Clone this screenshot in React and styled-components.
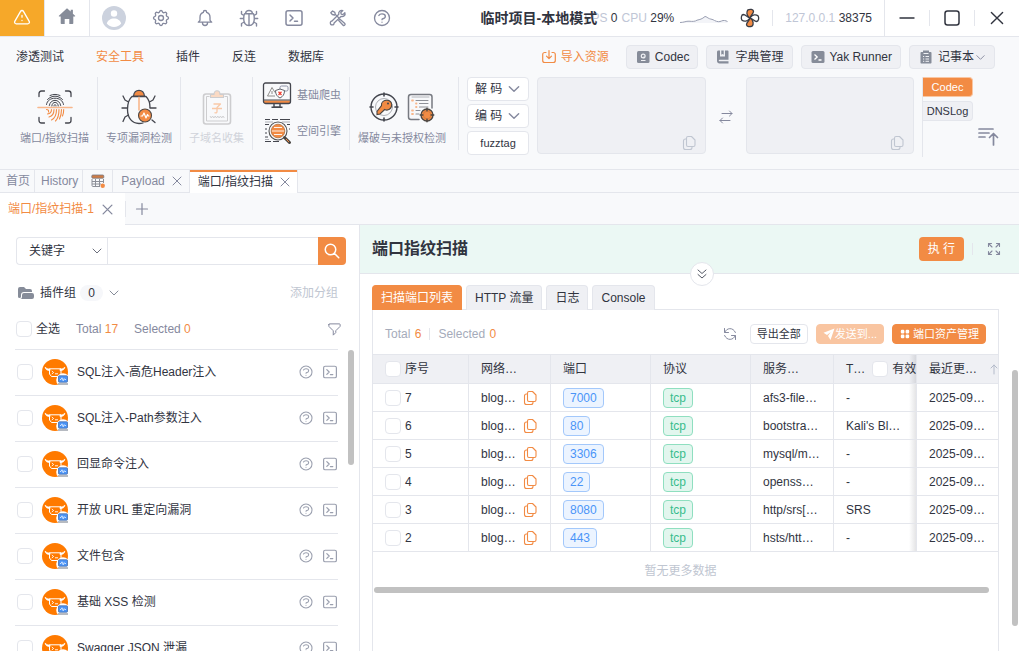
import React, { useState } from "react";
import styled, { createGlobalStyle } from "styled-components";
import {
  HiOutlineCog,
  HiOutlineBell,
  HiOutlineExclamation,
  HiOutlineQuestionMarkCircle,
  HiOutlineFilter,
  HiOutlineSearch,
  HiFolderOpen,
  HiViewGrid,
} from "react-icons/hi";

const GlobalStyle = createGlobalStyle`
  * {
    box-sizing: border-box;
  }

  body {
    margin: 0;
    background: #fff;
    color: #31343f;
    font-family: "Liberation Sans", "Noto Sans CJK SC", sans-serif;
    font-size: 12px;
    line-height: 16px;
  }

  button, input, select, textarea {
    font: inherit;
    color: inherit;
    margin: 0;
  }

  button {
    cursor: pointer;
  }

  svg {
    display: block;
    flex: none;
  }
`;

const Page = styled.div`
  display: flex;
  flex-direction: column;
  height: 100vh;
  overflow: hidden;
`;

const Spacer = styled.div`
  flex: 1;
`;

const Divider = styled.span`
  flex: none;
  width: 1px;
  height: ${(p) => p.$h || 16}px;
  margin: 0 ${(p) => p.$gap || 0}px;
  background: #e4e6ec;
`;

const IconButton = styled.button`
  display: flex;
  flex: none;
  align-items: center;
  justify-content: center;
  width: ${(p) => p.$w || 20}px;
  height: ${(p) => p.$h || 20}px;
  padding: 0;
  border: 0;
  background: none;
  color: ${(p) => p.$color || "#85899e"};

  .thin path {
    stroke-width: 1.6;
  }
`;

/* ---------- title bar ---------- */

const TitleBar = styled.header`
  display: flex;
  flex: none;
  align-items: center;
  height: 37px;
  border-bottom: 1px solid #e4e6ec;
`;

const WarnButton = styled(IconButton)`
  width: 44px;
  height: 36px;
  background: #f6a829;
  color: #fff;
`;

const HomeButton = styled(IconButton)`
  width: 46px;
  height: 36px;
  border: solid #e4e6ec;
  border-width: 0 1px;
  padding-bottom: 4px;
`;

const ToolIcons = styled.nav`
  display: flex;
  align-items: center;
  padding-left: 2px;
`;

const ProjectName = styled.h1`
  margin: 0;
  font-size: 14px;
  line-height: 20px;
  white-space: nowrap;
  z-index: 1;
`;

const Stats = styled.div`
  display: flex;
  align-items: center;
  gap: 4px;
  margin: 0 6px 0 -13px;
`;

const Stat = styled.span`
  color: #c0c6d6;
  white-space: nowrap;

  b {
    color: #31343f;
    font-weight: normal;
  }
`;

const Address = styled(Stat)`
  margin: 0 12px;
`;

const WindowButtons = styled.div`
  display: flex;
  align-items: center;
  height: 36px;
  border-left: 1px solid #e4e6ec;
`;

/* ---------- menu ---------- */

const Menu = styled.nav`
  display: flex;
  flex: none;
  align-items: center;
  gap: 8px;
  height: 40px;
  padding: 0 24px 0 16px;
  background: #f8f9fb;
`;

const MenuLinks = styled.div`
  display: flex;
  gap: 32px;
`;

const MenuLink = styled.a`
  color: ${(p) => (p.$active ? "#f28b44" : "#31343f")};
  text-decoration: none;
`;

const MenuButton = styled.button`
  display: flex;
  align-items: center;
  gap: 4px;
  height: 24px;
  padding: 0 8px;
  border: 1px solid ${(p) => (p.$plain ? "transparent" : "#e4e6ec")};
  border-radius: 4px;
  background: ${(p) => (p.$plain ? "none" : "#eff0f4")};
  color: ${(p) => (p.$plain ? "#f28b44" : "#31343f")};
  white-space: nowrap;
`;

const Drop = styled.span`
  display: flex;
  align-items: center;
  gap: 1px;

  svg {
    color: #85899e;
  }
`;

/* ---------- tool ribbon ---------- */

const Ribbon = styled.section`
  display: flex;
  flex: none;
  height: 93px;
  padding-left: 12px;
  border-bottom: 1px solid #e4e6ec;
  background: #f8f9fb;
`;

const Tool = styled.button`
  display: flex;
  flex-direction: column;
  flex: none;
  align-items: center;
  gap: 5px;
  height: 73px;
  padding: 12px ${(p) => (p.$last ? 12 : 8)}px 0 8px;
  border: 0;
  border-right: 1px solid #e4e6ec;
  background: none;
  color: #85899e;
  font-size: 11px;

  &:disabled {
    color: #d0d3da;
  }
`;

const ToolPair = styled.div`
  display: flex;
  flex-direction: column;
  flex: none;
  gap: 8px;
  height: 73px;
  padding: 4px 8px 0;
  border-right: 1px solid #e4e6ec;
`;

const SmallTool = styled.button`
  display: flex;
  align-items: center;
  gap: 4px;
  height: 28px;
  padding: 0;
  border: 0;
  background: none;
  color: #85899e;
  font-size: 11px;
`;

const IconPair = styled.span`
  display: flex;
  gap: 4px;
`;

const CodecButtons = styled.div`
  display: flex;
  flex-direction: column;
  flex: none;
  gap: 3px;
  width: 62px;
  margin: 0 8px;
`;

const CodecButton = styled.button`
  display: flex;
  align-items: center;
  justify-content: center;
  gap: 5px;
  height: 24px;
  padding: 0;
  border: 1px solid #e4e6ec;
  border-radius: 4px;
  background: #fff;
  font-size: ${(p) => (p.$small ? 11 : 12)}px;

  svg {
    color: #85899e;
  }
`;

const CodecField = styled.div`
  display: flex;
  flex: 1;
  align-items: flex-end;
  min-width: 0;
  height: 77px;
  padding: 0 6px;
  border: 1px solid #e4e6ec;
  border-radius: 4px;
  background: #eff0f4;

  textarea {
    flex: 1;
    width: 0;
    min-width: 0;
    height: 70px;
    padding: 4px;
    border: 0;
    outline: 0;
    resize: none;
    background: none;
  }
`;

const SwapButton = styled(IconButton)`
  width: 40px;
  height: 80px;
`;

const RibbonSide = styled.div`
  display: flex;
  flex: none;
  flex-direction: column;
  gap: 4px;
  width: 51px;
  height: 80px;
  margin-left: 8px;
  border-left: 1px solid #e4e6ec;
`;

const SideTab = styled.button`
  height: 20px;
  padding: 0;
  border: 1px solid ${(p) => (p.$active ? "#f9c6a2" : "#e4e6ec")};
  border-left: 0;
  border-radius: 0 4px 4px 0;
  background: ${(p) => (p.$active ? "#f28b44" : "#eff0f4")};
  color: ${(p) => (p.$active ? "#fff" : "#31343f")};
  font-size: 11px;
`;

const CollapseButton = styled(IconButton)`
  align-self: flex-start;
  width: 30px;
  height: 24px;
  margin: 48px 16px 0 0;
`;

/* ---------- page tabs ---------- */

const PageTabs = styled.div`
  display: flex;
  flex: none;
  height: 23px;
  border-bottom: 1px solid #e4e6ec;
  background: #f8f9fb;
`;

const PageTab = styled.button`
  display: flex;
  align-items: center;
  gap: 7px;
  height: ${(p) => (p.$active ? 23 : 22)}px;
  padding: 0 ${(p) => (p.$close ? 7 : 4)}px 0 ${(p) => (p.$close ? 8 : 6)}px;
  border: 0;
  border-right: 1px solid #e4e6ec;
  background: ${(p) => (p.$active ? "#fff" : "none")};
  box-shadow: ${(p) => (p.$active ? "inset 0 2px #f28b44" : "none")};
  color: ${(p) => (p.$active ? "#31343f" : "#85899e")};
  white-space: nowrap;

  svg {
    color: #85899e;
  }
`;

const SubTabs = styled.div`
  display: flex;
  flex: none;
  align-items: center;
  height: 32px;
  background: #f8f9fb;
  border-bottom: 1px solid #e4e6ec;
`;

const SubTab = styled.button`
  display: flex;
  flex: none;
  align-items: center;
  gap: 8px;
  width: 125px;
  height: 32px;
  margin-bottom: -1px;
  padding: 0 0 0 8px;
  border: 0;
  background: #fff;
  color: #f28b44;

  svg {
    color: #85899e;
  }
`;

/* ---------- plugin panel ---------- */

const Main = styled.main`
  display: flex;
  flex: 1;
  min-height: 0;
`;

const PluginPanel = styled.aside`
  display: flex;
  flex-direction: column;
  flex: none;
  width: 360px;
  padding: 12px 5px 0 16px;
  border-right: 1px solid #e4e6ec;
`;

const SearchBox = styled.form`
  display: flex;
  flex: none;
  height: 28px;
  margin-right: 8px;

  input {
    flex: 1;
    min-width: 0;
    padding: 0 8px;
    border: 1px solid #e4e6ec;
    border-right: 0;
    outline: 0;
  }

  button {
    width: 28px;
    height: 28px;
    border-radius: 0 4px 4px 0;
    background: #f28b44;
    color: #fff;
  }
`;

const SelectWrap = styled.div`
  display: grid;
  width: 91px;
  align-items: center;

  select,
  svg {
    grid-area: 1 / 1;
  }

  select {
    height: 28px;
    padding: 0 12px;
    border: 1px solid #e4e6ec;
    border-right: 0;
    border-radius: 4px 0 0 4px;
    outline: 0;
    appearance: none;
    background: #fff;
  }

  svg {
    justify-self: end;
    margin-right: 4px;
    color: #6b6f7c;
    pointer-events: none;
  }
`;

const GroupRow = styled.div`
  display: flex;
  flex: none;
  align-items: center;
  height: 16px;
  margin: 20px 16px 0 0;

  svg {
    color: #868c99;
  }
`;

const GroupName = styled.span`
  margin: 0 4px;
`;

const Count = styled.span`
  width: 23px;
  margin-right: 5px;
  border-radius: 8px;
  background: #f6f7fa;
  text-align: center;
`;

const AddGroup = styled.button`
  padding: 0;
  border: 0;
  background: none;
  color: #c0c6d1;
`;

const SelectRow = styled.div`
  display: flex;
  flex: none;
  align-items: center;
  gap: 16px;
  height: 16px;
  margin: 20px 11px 12px 0;
`;

const CheckLabel = styled.label`
  display: flex;
  align-items: center;
  gap: 4px;
`;

const Check = styled.input.attrs({ type: "checkbox" })`
  flex: none;
  width: 16px;
  height: 16px;
  border: 1px solid #e4e6ec;
  border-radius: 4px;
  background: #fff;
  appearance: none;

  &:checked {
    border-color: #f28b44;
    background: #f28b44;
  }
`;

const Total = styled.span`
  color: ${(p) => p.$color || "#85899e"};
  white-space: nowrap;

  b {
    margin-left: ${(p) => p.$gap || 0}px;
    color: #f28b44;
    font-weight: normal;
  }
`;

const ListArea = styled.div`
  display: flex;
  flex: 1;
  gap: 10px;
  min-height: 0;
  margin-left: -1px;
`;

const PluginList = styled.ul`
  flex: 1;
  margin: 0;
  padding: 0;
  overflow: hidden;
  list-style: none;
`;

const PluginItem = styled.li`
  display: flex;
  align-items: center;
  height: 46px;
  padding: 0 0 1px 2px;
  border-top: 1px solid #e4e6ec;
`;

const PluginLabel = styled(CheckLabel)`
  flex: 1;
  gap: 9px;
`;

const ItemButton = styled(IconButton)`
  width: 16px;
  margin-left: 8px;
  color: #9a9fae;
`;

const Scrollbar = styled.div`
  flex: none;
  width: 6px;
  height: ${(p) => p.$h};
  margin-top: ${(p) => p.$top}px;
  border-radius: 3px;
  background: #c1c1c1;
`;

/* ---------- result panel ---------- */

const ResultPanel = styled.section`
  display: flex;
  flex-direction: column;
  flex: 1;
  min-width: 0;
`;

const ResultHeader = styled.div`
  position: relative;
  display: flex;
  flex: none;
  align-items: center;
  height: 49px;
  padding: 0 12px;
  border-bottom: 1px solid #e4e6ec;
  background: #ebf8f4;

  h2 {
    margin: 0;
    font-size: 16px;
    line-height: 24px;
  }
`;

const RunButton = styled.button`
  height: 24px;
  padding: 0 9px;
  border: 0;
  border-radius: 4px;
  background: #f28b44;
  color: #fff;
`;

const FoldButton = styled(IconButton)`
  position: absolute;
  bottom: -13px;
  left: 50%;
  width: 24px;
  height: 24px;
  border: 1px solid #e4e6ec;
  border-radius: 50%;
  background: #fff;
  color: #555965;
`;

const ResultBody = styled.div`
  display: flex;
  flex: 1;
  gap: 13px;
  min-height: 0;
  padding: 11px 1px 0 12px;
`;

const ResultContent = styled.div`
  display: flex;
  flex: 1;
  flex-direction: column;
  min-width: 0;
`;

const ResultTabs = styled.div`
  display: flex;
  flex: none;
  gap: 4px;
  height: 24px;
`;

const ResultTab = styled.button`
  height: 25px;
  padding: 0 8px;
  border: 1px solid ${(p) => (p.$active ? "#f28b44" : "#e4e6ec")};
  border-bottom: 0;
  border-radius: 4px 4px 0 0;
  background: ${(p) => (p.$active ? "#f28b44" : "#eff0f4")};
  color: ${(p) => (p.$active ? "#fff" : "#31343f")};
  white-space: nowrap;
  z-index: 1;
`;

const ResultCard = styled.div`
  flex: 1;
  border: 1px solid #e4e6ec;
  border-bottom: 0;
`;

const TableTools = styled.div`
  display: flex;
  align-items: center;
  height: 44px;
  padding: 4px 12px 0;
`;

const SmallButton = styled.button`
  display: flex;
  align-items: center;
  gap: ${(p) => p.$gap || 0}px;
  height: 20px;
  margin-left: ${(p) => p.$left || 8}px;
  padding: 0 6px;
  border: 1px solid ${(p) => (p.$filled ? "#f28b44" : "#e4e6ec")};
  border-radius: 4px;
  background: ${(p) => (p.$filled ? "#f28b44" : "#fff")};
  color: ${(p) => (p.$filled ? "#fff" : "#31343f")};
  font-size: 11px;
  white-space: nowrap;

  &:disabled {
    border-color: #f9c5a1;
    background: #f9c5a1;
  }
`;

const PortTable = styled.table`
  width: 100%;
  border-spacing: 0;
  table-layout: fixed;

  th,
  td {
    height: 28px;
    padding: 0 0 0 12px;
    border-right: 1px solid #e4e6ec;
    border-bottom: 1px solid #e4e6ec;
    overflow: hidden;
    font-weight: normal;
    text-align: left;
    white-space: nowrap;
  }

  th {
    height: 30px;
    border-top: 1px solid #e4e6ec;
    background: #eff0f4;
  }

  th:nth-last-child(2),
  td:nth-last-child(2) {
    background-image: linear-gradient(to left, rgba(49, 52, 63, 0.13), transparent 7px);
  }

  th:last-child,
  td:last-child {
    border-right: 0;
  }
`;

const Col = styled.col`
  width: ${(p) => p.$w};
`;

const CellFlex = styled.div`
  display: flex;
  align-items: center;
  gap: ${(p) => p.$gap || 4}px;
`;

const Tag = styled.span`
  display: inline-block;
  height: 20px;
  padding: 1px 6px;
  border: 1px solid ${(p) => (p.$green ? "#8fdfc0" : "#a3c8fb")};
  border-radius: 4px;
  background: ${(p) => (p.$green ? "#e2f6ee" : "#ecf4ff")};
  color: ${(p) => (p.$green ? "#38bd8c" : "#4a94f8")};
  vertical-align: middle;
`;

const Empty = styled.p`
  margin: 0;
  padding: 11px 10px 8px 0;
  color: #c0c6d1;
  text-align: center;
`;

const HScrollbar = styled.div`
  height: 6px;
  margin: 0 9px 0 1px;
  border-radius: 3px;
  background: #c1c1c1;
`;

/* ---------- icons ---------- */

const Svg = ({ size = 16, box = "0 0 16 16", sw = 1.2, children }) => (
  <svg
    width={size}
    height={size}
    viewBox={box}
    fill="none"
    stroke="currentColor"
    strokeWidth={sw}
    strokeLinecap="round"
    strokeLinejoin="round"
    aria-hidden="true"
  >
    {children}
  </svg>
);

const Chevron = ({ size = 12, sw = 1 }) => (
  <Svg size={size} sw={sw} box="0 0 12 12">
    <path d="M2 4l4 4 4-4" />
  </Svg>
);

const Cross = ({ size = 10, sw = 1 }) => (
  <Svg size={size} sw={sw} box="1 1 10 10">
    <path d="M2 2l8 8M10 2l-8 8" />
  </Svg>
);

const Home = () => (
  <svg width="18" height="18" viewBox="0 0 18 18" fill="#868c99" aria-hidden="true">
    <path d="M9 1.2L.9 8.8c-.3.3 0 .8.4.8h1.4v6.6c0 .5.3.8.8.8h3.2v-5h4.6v5h3.2c.5 0 .8-.3.8-.8V9.6h1.4c.4 0 .7-.5.4-.8l-2.200-2V2.7h-2.200v1.9z" />
  </svg>
);

const Avatar = () => (
  <svg width="24" height="24" viewBox="0 0 24 24" aria-hidden="true">
    <circle cx="12" cy="12" r="12" fill="#ccd2de" />
    <circle cx="12" cy="7.5" r="3.2" fill="#fff" />
    <path d="M4.8 17.500c.8-3 3.600-5 7.200-5s6.400 2 7.200 5c-1.700 2.200-4.300 3.500-7.200 3.500s-5.500-1.300-7.200-3.500z" fill="#fff" />
  </svg>
);

const Bug = () => (
  <Svg size={20} box="0 0 20 20" sw={1.4}>
    <path d="M6.500 5.500c.5-4 6.500-4 7 0M5.500 5.800h9c.6 1.300.8 3 .8 5 0 4-2 6.700-5.300 6.700s-5.300-2.700-5.300-6.700c0-2 .2-3.700.8-5zM10 6v11.500M4.700 10.500H1.300M15.300 10.500h3.400M4.900 7.500L2.500 6V3.500M15.100 7.500L17.500 6V3.500M5.300 14l-2.800 1.500V18M14.700 14l2.800 1.500V18" />
  </Svg>
);

const Terminal = ({ size = 20, sw = 1.5 }) => (
  <Svg size={size} box="0 0 20 20" sw={sw}>
    <rect x="2" y="2.800" width="16" height="14.400" rx="2" />
    <path d="M6 7l3 3-3 3M10.500 13.200h3" />
  </Svg>
);

const Tools = () => (
  <Svg size={20} box="0 0 20 20" sw={1.3}>
    <path d="M2.800 4.800l1.800-1.800 2.200 1.400.5 2 3.400 3.400M6.600 7l-2.300-.5-1.500-1.700M12 11.200l4.800 4.300c1 1-.7 2.700-1.700 1.700l-4.400-4.700z" />
    <path d="M16.900 4.600l-2 2-1.700-.4-.4-1.700 2-2c-2.400-.8-4.700 1.300-4 3.800L4 13c-2.200 0-2.300 3.800.2 3.800 1.200 0 1.900-.8 1.900-1.900l6.900-6.400c2.600.7 4.700-1.500 3.900-3.900z" />
  </Svg>
);

const Spark = () => (
  <svg width="48" height="16" viewBox="0 0 48 16" fill="none" aria-hidden="true">
    <path d="M0 12.500c4 0 6-1.500 9-1.300 4 .4 6 .3 8-1 3-.8 5-1 8-3.700 1.500 0 2.500 1.500 4.500 2.200s3 .5 5 1.800c3 1.500 5 1.500 7 .5s4-.5 6 .5V13H0z" fill="#f3f4f8" />
    <path d="M0 12.500c4 0 6-1.500 9-1.300 4 .4 6 .3 8-1 3-.8 5-1 8-3.700 1.500 0 2.500 1.500 4.500 2.200s3 .5 5 1.800c3 1.500 5 1.500 7 .5s4-.5 6 .5" stroke="#9a9fb2" />
  </svg>
);

const blade = "M10 10C6.500 8 6 4 8 1.800c2.300-1 5-.4 5.500 1.400C13.500 6 11 6.500 10 10z";

const Fan = () => (
  <svg width="20" height="20" viewBox="0 0 20 20" stroke="#383b44" strokeWidth="1.3" strokeLinejoin="round" aria-hidden="true">
    <path d={blade} fill="#fff" transform="rotate(90 10 10)" />
    <path d={blade} fill="#fff" transform="rotate(270 10 10)" />
    <path d={blade} fill="#f28b44" />
    <path d={blade} fill="#f28b44" transform="rotate(180 10 10)" />
  </svg>
);

const Import = () => (
  <Svg>
    <path d="M5 3.500H3.700c-1.200 0-2 .8-2 2v6c0 1.200.8 2 2 2h8.600c1.200 0 2-.8 2-2v-6c0-1.200-.8-2-2-2H11M8 1.500v8M5.500 7.200L8 9.700l2.500-2.500" />
  </Svg>
);

const CodecIcon = () => (
  <svg width="16" height="16" viewBox="0 0 16 16" aria-hidden="true">
    <rect x="2" y="2" width="12.500" height="12" rx="1.500" fill="#868c99" />
    <circle cx="8.200" cy="7" r="1.900" fill="none" stroke="#eff0f4" strokeWidth="1.200" />
    <path d="M6 11.500h4.500M9 7.500v1.700" stroke="#eff0f4" strokeWidth="1.200" />
  </svg>
);

const BookIcon = () => (
  <svg width="16" height="16" viewBox="0 0 16 16" aria-hidden="true">
    <path d="M3.500 1.500H5v6h5v-6h2.500c.6 0 1 .4 1 1v8.200H4.500c-1 0-1 1.600 0 1.600h9v2.200h-9c-1.400 0-2.500-1-2.500-2.500V3c0-.9.6-1.500 1.500-1.500z" fill="#868c99" />
    <path d="M6.300 1.500h2.400v4.200l-1.200-.7-1.200.7z" fill="#868c99" />
  </svg>
);

const YakIcon = () => (
  <svg width="16" height="16" viewBox="0 0 16 16" aria-hidden="true">
    <rect x="1.500" y="2" width="13" height="12" rx="1.500" fill="#868c99" />
    <path d="M4.500 5.500L7.200 8l-2.700 2.500M8.500 11h3" fill="none" stroke="#fff" strokeWidth="1.300" />
  </svg>
);

const NoteIcon = () => (
  <svg width="16" height="16" viewBox="0 0 16 16" aria-hidden="true">
    <path d="M3.500 3H5V1.500h6V3h1.500c.6 0 1 .4 1 1v9.500c0 .6-.4 1-1 1h-9c-.6 0-1-.4-1-1V4c0-.6.4-1 1-1z" fill="#868c99" />
    <path d="M5.500 4.500h5M5 7.500h1.200M7.500 7.500H11M5 10h1.200M7.500 10H11M5 12.300h1.200M7.500 12.300H11" stroke="#eff0f4" strokeWidth="1" />
  </svg>
);

const Fingerprint = () => (
  <svg width="36" height="36" viewBox="0 0 36 36" fill="none" strokeLinecap="round" aria-hidden="true">
    <path d="M2 7.500V4.500C2 3 3 2 4.500 2h3M28.500 2h3C33 2 34 3 34 4.500v3M34 28.500v3c0 1.500-1 2.500-2.500 2.500h-3M7.500 34h-3C3 34 2 33 2 31.500v-3" stroke="#44464e" strokeWidth="1.300" />
    <path d="M13 6.500c3.500-1.500 6.500-1.500 10 0M10.500 10.500c4.500-4.500 10.500-4.500 15 0M9.500 15.500c1-8.500 16-8.500 17 0M12.300 16.500c1-7 10.400-7 11.400 0M14.800 17c.5-5 6-5 6.500 0M17 17c0-2 2-2 2 0" stroke="#44464e" />
    <path d="M9.500 20.500c1.500 0 2.500 1 2 2.500M10.500 25c3-.5 4-2 4-4.500M12 28c4-1 5-3.500 5-7.500M14.500 31c4-2 5-5.500 5-10.500M18.500 32c3-3 3.500-7 3.500-11.500M22.500 30c1.500-3 2-6 2-9.500M25.500 27c1-2 1.200-4 1.200-6.500" stroke="#f28b44" strokeWidth="1.100" />
    <path d="M1 18.500h34" stroke="#f8b78c" strokeWidth="1.600" />
  </svg>
);

const BugScan = () => (
  <svg width="36" height="36" viewBox="0 0 36 36" fill="none" strokeLinecap="round" strokeLinejoin="round" aria-hidden="true">
    <path d="M11 7.500h14c3 3 4 7 4 11M22 34c-1 .3-2.500.5-4 .5-7 0-11.500-5.500-11.500-14 0-5.500 1-10 4.500-13" stroke="#44464e" strokeWidth="1.300" />
    <path d="M18 8v13" stroke="#f8b78c" strokeWidth="1.600" />
    <path d="M12.500 7c1-7.500 10-7.500 11 0z" fill="#f28b44" stroke="#44464e" strokeWidth="1.200" />
    <path d="M7.500 13L4 11 2 7M28.500 13l3.500-2 2-4M6.500 19H1M29 19h6M7.500 26L4 28l-2 4.500M31 31l3 2.500" stroke="#44464e" strokeWidth="1.300" />
    <circle cx="24" cy="26.500" r="6.500" fill="#f28b44" stroke="#504742" strokeWidth="1.100" />
    <path d="M20 27h1.500l1.500-3 2 5 1.500-3.500.8 1.500H28" stroke="#fff" strokeWidth="1.200" />
  </svg>
);

const Clipboard = () => (
  <svg width="36" height="36" viewBox="0 0 36 36" fill="none" stroke="#cdcdcf" strokeLinejoin="round" aria-hidden="true">
    <rect x="4.500" y="5" width="27" height="30" rx="2.500" strokeWidth="1.600" />
    <path d="M10.500 7.500H7.500v24.500h21V7.500h-3" strokeWidth="1" />
    <path d="M11.500 8.500v-3H15c0-5 6-5 6 0h3.500v3z" fill="#fadac4" strokeWidth="1.100" />
    <path d="M14.500 15h7L18 18.500v4c0 1.500-1 1.500-2.500 1.200M13 19.500h10" stroke="#f9c9a8" strokeWidth="1.300" />
    <path d="M11 27l1.300 2 1.300-2 1.300 2 1.300-2 1.300 2 1.300-2 1.300 2 1.300-2 1.300 2 1.300-2 1.300 2" strokeWidth=".9" />
  </svg>
);

const Crawler = () => (
  <svg width="32" height="28" viewBox="0 0 32 28" fill="none" strokeLinejoin="round" aria-hidden="true">
    <path d="M3 19.500h26v1.800c0 1-.6 1.700-1.600 1.700H4.600c-1 0-1.600-.7-1.600-1.700z" fill="#f28b44" />
    <rect x="2.500" y="2" width="27" height="20.500" rx="2" stroke="#44464e" strokeWidth="1.300" />
    <path d="M3 19h26" stroke="#44464e" />
    <path d="M13 23v3h6v-3M10.500 26.300h11" stroke="#44464e" strokeWidth="1.400" />
    <path d="M6.500 15L11 6.500l3 5M6.500 15H14M11 10v3" stroke="#85827f" strokeWidth=".9" />
    <rect x="19" y="5" width="8" height="5" rx="1.500" stroke="#85899e" strokeWidth=".9" />
    <path d="M14.500 9.500l4.500-1.500 4.500 1.500c0 3.800-1.500 6-4.500 7.500-3-1.500-4.500-3.700-4.500-7.500z" fill="#fff" stroke="#63656c" />
    <path d="M17.500 10.800l3 3.200M20.500 10.800l-3 3.200" stroke="#f04438" strokeWidth="1.300" />
  </svg>
);

const Engine = () => (
  <svg width="32" height="28" viewBox="0 0 32 28" fill="none" aria-hidden="true">
    <path d="M4 2.500h5M11 2.500h6M19 2.500h10M4 7.500h4M26 7.500h3M4 12h2M28 12h1M4 16h2M4 20h3M4 24.500h6M12 24.500h6" stroke="#44464e" />
    <path d="M4 5h8M21 5h8M4 22.500h4" stroke="#aeb0b6" />
    <circle cx="17" cy="14" r="9" fill="#f8f9fb" stroke="#555" strokeWidth="1.100" />
    <circle cx="17" cy="14" r="6.800" fill="#f28b44" stroke="#b0713f" strokeWidth=".8" />
    <path d="M13 10.500h8M11 14h12M13 17.500h8" stroke="#fff3e9" />
    <path d="M23.500 20.500l5 5" stroke="#4b4642" strokeWidth="3" strokeLinecap="round" />
    <path d="M25 22l3 3" stroke="#f28b44" />
  </svg>
);

const KeyTarget = () => (
  <svg width="32" height="36" viewBox="0 0 32 36" fill="none" strokeLinecap="round" aria-hidden="true">
    <circle cx="16" cy="18" r="13" stroke="#44464e" strokeWidth="1.400" />
    <circle cx="16" cy="18" r="8.500" stroke="#a5a7ad" strokeWidth=".9" />
    <path d="M16 4v3M16 29v3M2 18h3M27 18h3" stroke="#44464e" strokeWidth="1.600" />
    <path d="M13.500 16.500c-.7-6 9.500-7.500 10.200-1.200.2 5-4 6.700-7 5.200L12 25l-3 .5v-3z" fill="#f28b44" stroke="#4b4642" strokeWidth="1.100" />
    <circle cx="20" cy="14.500" r="1" fill="#44464e" />
  </svg>
);

const ListTarget = () => (
  <svg width="32" height="36" viewBox="0 0 32 36" fill="none" strokeLinecap="round" aria-hidden="true">
    <path d="M28 19V8c0-1.500-.8-2.500-2.300-2.500H7C5.500 5.500 4.500 6.500 4.500 8v20c0 1.500 1 2.500 2.500 2.500h8" stroke="#777a81" strokeWidth="1.500" />
    <path d="M8 8H25" stroke="#b4b6bb" />
    <path d="M12 11.500h12M15.500 14.500h8.500M15.500 18h8.500M12 21.500h4M12 25h3" stroke="#8e9198" strokeWidth="1.100" />
    <path d="M8 11.500h1M12 14.500h.5M12 18h.5M8 21.500h1M8 25h1" stroke="#f8b78c" strokeWidth="1.800" />
    <circle cx="23" cy="26" r="6" fill="#f28b44" stroke="#4b4642" strokeWidth="1.300" />
    <circle cx="23" cy="26" r="3.800" stroke="#c9773e" strokeWidth=".8" />
    <path d="M23 19.200v2.600M23 30.200v2.600M16.200 26h2.600M27.200 26h2.600" stroke="#4b4642" strokeWidth="1.400" />
  </svg>
);

const Copy = () => (
  <Svg sw={1.1}>
    <path d="M7 1.500h3.500L14 5v5c0 .9-.6 1.500-1.500 1.500H7c-.9 0-1.500-.6-1.500-1.500V3c0-.9.6-1.500 1.500-1.500z" />
    <path d="M5.500 4H4.500C3.400 4 2.500 4.900 2.500 6v6.500c0 1.100.9 2 2 2H9c1.100 0 2-.9 2-2v-1" />
  </Svg>
);

const Swap = () => (
  <Svg sw={1}>
    <path d="M4 4.500h10M11.500 2L14 4.500 11.500 7M12 11.500H2M4.500 9L2 11.500 4.500 14" />
  </Svg>
);

const Collapse = () => (
  <Svg size={22} box="0 0 22 22" sw={1.7}>
    <path d="M2 3h14M2 7h10M2 11h6M16.500 19V8M12.500 11.500l4-4 4 4" />
  </Svg>
);

const TableIcon = () => (
  <svg width="14" height="14" viewBox="1 1 14 14" fill="none" aria-hidden="true">
    <path d="M2 6v6.500c0 .6.400 1 1 1h7M13.500 6v4M2 8.500h11M2 11h9M5.500 6v7.500M9.500 6v7.500" stroke="#8c8f98" />
    <rect x="1.800" y="2" width="12" height="3.200" rx="1" fill="#cf7c45" stroke="#777a84" strokeWidth=".8" />
    <circle cx="12.700" cy="12.700" r="2.200" fill="#f28b44" />
  </svg>
);

const YakAvatar = () => (
  <svg width="26" height="26" viewBox="0 0 26 26" fill="none" aria-hidden="true">
    <circle cx="13" cy="13" r="13" fill="#ff7a00" />
    <path d="M3.200 8.200c.3 2.300 1.800 3.300 4.800 3.300v-1.500c-2 0-3.600-.3-4.800-1.800zM22.800 8.200c-.3 2.300-1.800 3.300-4.800 3.300v-1.500c2 0 3.600-.3 4.800-1.800z" fill="#fff" stroke="#fff" strokeWidth=".8" />
    <path d="M7.500 9.800h11.500v5l-1.800 2.700H9.500l-2-2.500z" stroke="#fff" />
    <path d="M9.800 12l1.800 1.500-1.800 1.500M13 14.800h3" stroke="#fff" strokeWidth=".9" />
    <circle cx="21" cy="21" r="6.800" fill="#fff" />
    <rect x="16.500" y="16.800" width="9" height="6.400" rx=".8" fill="#4a94f8" stroke="#4a6fa8" strokeWidth=".8" />
    <path d="M18 20.500h1l1-1.700 1.200 3 1-2.200.6.900h1.200" stroke="#fff" strokeWidth=".7" />
    <path d="M16 25h10" stroke="#6e7683" />
  </svg>
);

const Expand = () => (
  <Svg sw={1.1}>
    <path d="M2.500 5.500v-3h3M2.500 2.500L6 6M10.500 2.500h3v3M13.500 2.500L10 6M13.500 10.500v3h-3M13.500 13.500L10 10M5.500 13.500h-3v-3M2.500 13.500L6 10" />
  </Svg>
);

const Refresh = () => (
  <Svg sw={1}>
    <path d="M2.500 2.500v4h4M13.500 13.500v-4h-4M2.800 6.200C4.500 1.800 11 .8 13.400 6.500M13.200 9.800C11.500 14.200 5 15.200 2.600 9.500" />
  </Svg>
);

const Send = () => (
  <svg width="12" height="12" viewBox="1 1 12 12" fill="#fff" aria-hidden="true">
    <path d="M12.500 1.500L1.500 5.700 5 8l3.700-3L6 9l2.500 4z" />
  </svg>
);

/* ---------- data ---------- */

const menus = ["渗透测试", "安全工具", "插件", "反连", "数据库"];

const plugins = [
  "SQL注入-高危Header注入",
  "SQL注入-Path参数注入",
  "回显命令注入",
  "开放 URL 重定向漏洞",
  "文件包含",
  "基础 XSS 检测",
  "Swagger JSON 泄漏",
];

const ports = [
  { id: 7, port: 7000, service: "afs3-file…", title: "-" },
  { id: 6, port: 80, service: "bootstra…", title: "Kali's Bl…" },
  { id: 5, port: 3306, service: "mysql/m…", title: "-" },
  { id: 4, port: 22, service: "openss…", title: "-" },
  { id: 3, port: 8080, service: "http/srs[…", title: "SRS" },
  { id: 2, port: 443, service: "hsts/htt…", title: "-" },
];

const resultTabs = ["扫描端口列表", "HTTP 流量", "日志", "Console"];

function TopBar() {
  return (
    <TitleBar>
      <WarnButton aria-label="warning">
        <HiOutlineExclamation className="thin" size={20} />
      </WarnButton>
      <HomeButton aria-label="home"><Home /></HomeButton>
      <ToolIcons>
        <IconButton $w={44} $h={36} aria-label="user"><Avatar /></IconButton>
        <IconButton $w={50} $h={36} aria-label="settings">
          <HiOutlineCog className="thin" size={20} />
        </IconButton>
        <IconButton $w={38} $h={36} aria-label="messages">
          <HiOutlineBell className="thin" size={20} />
        </IconButton>
        <IconButton $w={50} $h={36} aria-label="bug"><Bug /></IconButton>
        <IconButton $w={40} $h={36} aria-label="terminal"><Terminal /></IconButton>
        <IconButton $w={48} $h={36} aria-label="tools"><Tools /></IconButton>
        <IconButton $w={40} $h={36} aria-label="help">
          <HiOutlineQuestionMarkCircle className="thin" size={20} />
        </IconButton>
      </ToolIcons>
      <Spacer />
      <ProjectName>临时项目-本地模式</ProjectName>
      <Stats>
        <Stat>FPS <b>0</b></Stat>
        <Stat>CPU <b>29%</b></Stat>
      </Stats>
      <Spark />
      <IconButton $w={44} $h={36} aria-label="running tasks"><Fan /></IconButton>
      <Divider />
      <Address>127.0.0.1 <b>38375</b></Address>
      <WindowButtons>
        <IconButton $w={44} $h={36} $color="#31343f" aria-label="minimize">
          <Svg sw={1.4}><path d="M1 8h14" /></Svg>
        </IconButton>
        <Divider />
        <IconButton $w={44} $h={36} $color="#31343f" aria-label="maximize">
          <Svg sw={1.5}><rect x="1" y="1" width="14" height="14" rx="2.500" /></Svg>
        </IconButton>
        <Divider />
        <IconButton $w={44} $h={36} $color="#31343f" aria-label="close">
          <Cross size={14} />
        </IconButton>
      </WindowButtons>
    </TitleBar>
  );
}

function MainMenu() {
  return (
    <Menu>
      <MenuLinks>
        {menus.map((name, i) => (
          <MenuLink key={name} href="#" $active={i === 1}>{name}</MenuLink>
        ))}
      </MenuLinks>
      <Spacer />
      <MenuButton $plain><Import />导入资源</MenuButton>
      <MenuButton><CodecIcon />Codec</MenuButton>
      <MenuButton><BookIcon />字典管理</MenuButton>
      <MenuButton><YakIcon />Yak Runner</MenuButton>
      <MenuButton><NoteIcon /><Drop>记事本<Chevron size={11} /></Drop></MenuButton>
    </Menu>
  );
}

function ToolRibbon() {
  return (
    <Ribbon>
      <Tool><Fingerprint />端口/指纹扫描</Tool>
      <Tool><BugScan />专项漏洞检测</Tool>
      <Tool disabled><Clipboard />子域名收集</Tool>
      <ToolPair>
        <SmallTool><Crawler />基础爬虫</SmallTool>
        <SmallTool><Engine />空间引擎</SmallTool>
      </ToolPair>
      <Tool $last>
        <IconPair><KeyTarget /><ListTarget /></IconPair>
        爆破与未授权检测
      </Tool>
      <CodecButtons>
        <CodecButton>解 码<Chevron size={14} sw={1.2} /></CodecButton>
        <CodecButton>编 码<Chevron size={14} sw={1.2} /></CodecButton>
        <CodecButton $small>fuzztag</CodecButton>
      </CodecButtons>
      <CodecField>
        <textarea aria-label="input" />
        <IconButton $color="#c0c6d1" aria-label="copy input"><Copy /></IconButton>
      </CodecField>
      <SwapButton aria-label="swap"><Swap /></SwapButton>
      <CodecField>
        <textarea aria-label="output" />
        <IconButton $color="#c0c6d1" aria-label="copy output"><Copy /></IconButton>
      </CodecField>
      <RibbonSide>
        <SideTab $active>Codec</SideTab>
        <SideTab>DNSLog</SideTab>
      </RibbonSide>
      <CollapseButton aria-label="collapse"><Collapse /></CollapseButton>
    </Ribbon>
  );
}

function Plugins() {
  return (
    <PluginPanel>
      <SearchBox>
        <SelectWrap>
          <select aria-label="search type">
            <option>关键字</option>
          </select>
          <Chevron />
        </SelectWrap>
        <input aria-label="keyword" />
        <IconButton type="button" aria-label="search">
          <HiOutlineSearch size={18} />
        </IconButton>
      </SearchBox>
      <GroupRow>
        <HiFolderOpen size={20} />
        <GroupName>插件组</GroupName>
        <Count>0</Count>
        <Chevron />
        <Spacer />
        <AddGroup>添加分组</AddGroup>
      </GroupRow>
      <SelectRow>
        <CheckLabel><Check />全选</CheckLabel>
        <Total>Total <b>17</b></Total>
        <Total>Selected <b>0</b></Total>
        <Spacer />
        <IconButton $w={18} aria-label="filter">
          <HiOutlineFilter className="thin" size={15} />
        </IconButton>
      </SelectRow>
      <ListArea>
        <PluginList>
          {plugins.map((name) => (
            <PluginItem key={name}>
              <PluginLabel><Check /><YakAvatar />{name}</PluginLabel>
              <ItemButton aria-label="help">
                <HiOutlineQuestionMarkCircle className="thin" size={16} />
              </ItemButton>
              <ItemButton aria-label="source"><Terminal size={16} /></ItemButton>
            </PluginItem>
          ))}
        </PluginList>
        <Scrollbar $h="115px" $top={1} />
      </ListArea>
    </PluginPanel>
  );
}

function Ports() {
  return (
    <PortTable>
      <colgroup>
        <Col $w="96px" />
        <Col $w="82px" />
        <Col $w="16%" />
        <Col $w="16%" />
        <Col $w="83px" />
        <Col $w="83px" />
        <Col />
      </colgroup>
      <thead>
        <tr>
          <th><CheckLabel><Check />序号</CheckLabel></th>
          <th>网络…</th>
          <th>端口</th>
          <th>协议</th>
          <th>服务…</th>
          <th>
            <CellFlex $gap={7}>T…<CheckLabel><Check />有效</CheckLabel></CellFlex>
          </th>
          <th>
            <CellFlex>
              最近更…
              <Spacer />
              <Svg size={12} box="0 0 12 12" sw={1}>
                <path d="M8 11V2M5 5l3-3 3 3" stroke="#b4bbca" />
              </Svg>
            </CellFlex>
          </th>
        </tr>
      </thead>
      <tbody>
        {ports.map((p) => (
          <tr key={p.id}>
            <td><CheckLabel><Check />{p.id}</CheckLabel></td>
            <td>
              <CellFlex>
                blog…
                <IconButton $color="#f28b44" aria-label="copy"><Copy /></IconButton>
              </CellFlex>
            </td>
            <td><Tag>{p.port}</Tag></td>
            <td><Tag $green>tcp</Tag></td>
            <td>{p.service}</td>
            <td>{p.title}</td>
            <td>2025-09…</td>
          </tr>
        ))}
      </tbody>
    </PortTable>
  );
}

function Results() {
  const [tab, setTab] = useState(resultTabs[0]);

  return (
    <ResultPanel>
      <ResultHeader>
        <h2>端口指纹扫描</h2>
        <Spacer />
        <RunButton>执 行</RunButton>
        <Divider $gap={8} $h={12} />
        <IconButton $w={26} aria-label="full screen"><Expand /></IconButton>
        <FoldButton aria-label="unfold">
          <Svg sw={1}><path d="M4 4l4 3.500L12 4M4 8.500L8 12l4-3.500" /></Svg>
        </FoldButton>
      </ResultHeader>
      <ResultBody>
        <ResultContent>
          <ResultTabs>
            {resultTabs.map((name) => (
              <ResultTab key={name} $active={name === tab} onClick={() => setTab(name)}>
                {name}
              </ResultTab>
            ))}
          </ResultTabs>
          <ResultCard>
            <TableTools>
              <Total $color="#a5abba" $gap={1}>Total <b>6</b></Total>
              <Divider $gap={8} $h={12} />
              <Total $color="#a5abba" $gap={1}>Selected <b>0</b></Total>
              <Spacer />
              <IconButton $w={16} aria-label="refresh"><Refresh /></IconButton>
              <SmallButton $left={12}>导出全部</SmallButton>
              <SmallButton $filled disabled><Send />发送到...</SmallButton>
              <SmallButton $filled $gap={2}><HiViewGrid size={12} />端口资产管理</SmallButton>
            </TableTools>
            <Ports />
            <Empty>暂无更多数据</Empty>
            <HScrollbar />
          </ResultCard>
        </ResultContent>
        <Scrollbar $h="256px" $top={85} />
      </ResultBody>
    </ResultPanel>
  );
}

export default function App() {
  return (
    <Page>
      <GlobalStyle />
      <TopBar />
      <MainMenu />
      <ToolRibbon />
      <PageTabs>
        <PageTab>首页</PageTab>
        <PageTab>History</PageTab>
        <PageTab $close aria-label="table"><TableIcon /></PageTab>
        <PageTab $close>Payload<Cross /></PageTab>
        <PageTab $close $active>端口/指纹扫描<Cross /></PageTab>
      </PageTabs>
      <SubTabs>
        <SubTab>端口/指纹扫描-1<Cross size={11} sw={1.2} /></SubTab>
        <Divider />
        <IconButton $w={32} aria-label="add tab">
          <Svg><path d="M8 2.500v11M2.500 8h11" /></Svg>
        </IconButton>
      </SubTabs>
      <Main>
        <Plugins />
        <Results />
      </Main>
    </Page>
  );
}
